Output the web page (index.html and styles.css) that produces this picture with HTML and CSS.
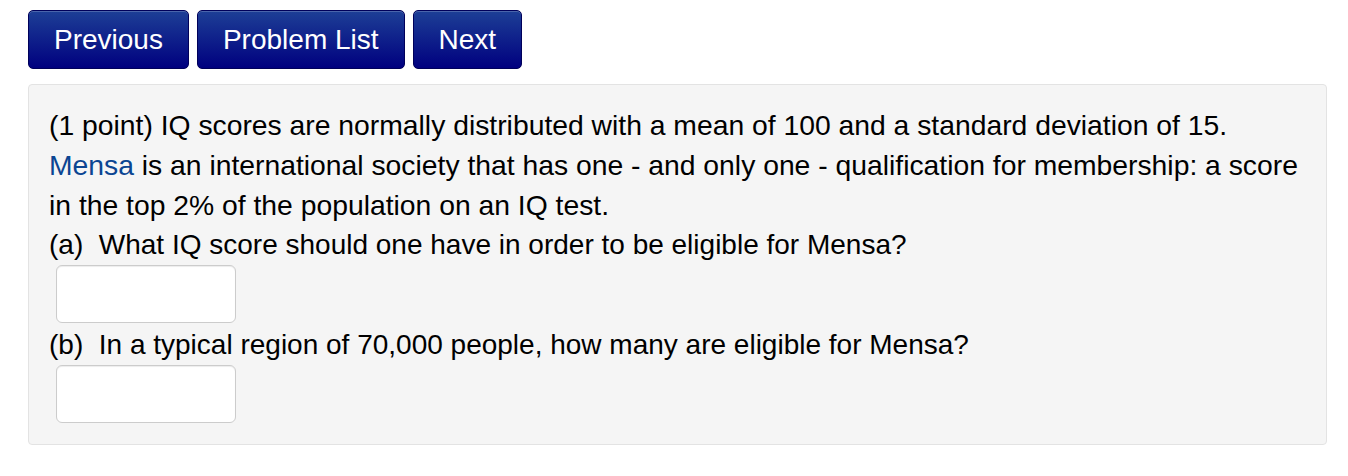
FILE: index.html
```html
<!DOCTYPE html>
<html>
<head>
<meta charset="utf-8">
<link rel="stylesheet" href="styles.css">
</head>
<body>
<div class="page">
  <div class="nav">
    <button class="btn">Previous</button>
    <button class="btn">Problem List</button>
    <button class="btn">Next</button>
  </div>
  <div class="problem">
    <p class="line intro">(1 point) IQ scores are normally distributed with a mean of 100 and a standard deviation of 15. <a class="link" href="#">Mensa</a> is an international society that has one - and only one - qualification for membership: a score in the top 2% of the population on an IQ test.</p>
    <p class="line">(a)&nbsp; What IQ score should one have in order to be eligible for Mensa?</p>
    <div class="answer"><input class="box" type="text"></div>
    <p class="line">(b)&nbsp; In a typical region of 70,000 people, how many are eligible for Mensa?</p>
    <div class="answer"><input class="box" type="text"></div>
  </div>
</div>
</body>
</html>
```

FILE: styles.css
```css
html, body {
  margin: 0;
  padding: 0;
  background: #ffffff;
}
body {
  font-family: "Liberation Sans", Arial, Helvetica, sans-serif;
  color: #000;
}
.page {
  padding: 10px 21px 0 28px;
}
.nav {
  display: flex;
  gap: 8px;
  height: 59px;
}
.btn {
  font-family: "Liberation Sans", Arial, sans-serif;
  font-size: 28px;
  color: #fff;
  background: linear-gradient(#1d3f96, #00007f);
  border: 1px solid #00005a;
  border-radius: 5px;
  padding: 0 25px;
  height: 59px;
  box-shadow: inset 0 1px 0 rgba(255,255,255,0.2);
  cursor: pointer;
}
.problem {
  margin-top: 15px;
  background: #f5f5f5;
  border: 1px solid #e3e3e3;
  border-radius: 4px;
  padding: 20px 20px 19px 20px;
  font-size: 28px;
  line-height: 40px;
}
.line {
  margin: 0;
}
.intro {
  font-size: 28.3px;
}
.link {
  color: #0b4592;
  text-decoration: none;
}
.answer {
  padding-left: 7px;
  height: 60px;
}
.box {
  box-sizing: border-box;
  width: 180px;
  height: 58px;
  border: 1px solid #cccccc;
  border-radius: 6px;
  background: #fff;
  margin: 0;
  padding: 0 8px;
  font-size: 24px;
  display: block;
  box-shadow: inset 0 1px 1px rgba(0,0,0,0.075);
}
```
